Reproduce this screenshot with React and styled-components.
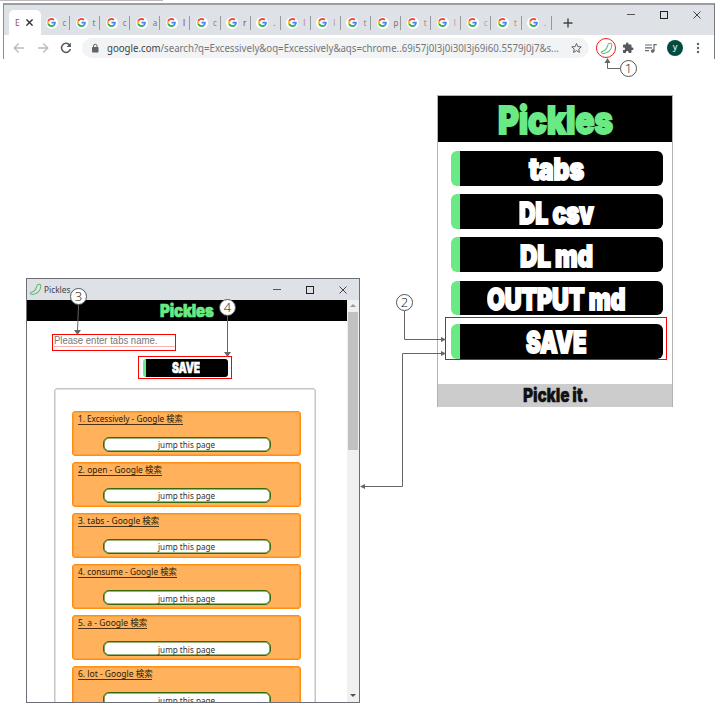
import React, { useLayoutEffect, useRef, useState } from "react";
import styled, { createGlobalStyle } from "styled-components";

const GlobalStyle = createGlobalStyle`
  * { box-sizing: border-box; }
  body { margin: 0; background: #fff; font-family: "Noto Sans", "Noto Sans CJK JP", sans-serif; }
`;

const Page = styled.main`
  position: relative;
  width: 720px;
  height: 720px;
  overflow: hidden;
  background: #fff;
`;
const TopRule = styled.div`
  width: 163px;
  height: 1px;
  background: #bdb9bd;
`;

/* Text stretched or condensed to an exact width */
const FitBox = styled.span`
  display: flex;
  width: ${(p) => p.$w}px;
  height: ${(p) => p.$size}px;
  line-height: ${(p) => p.$size}px;
  font-size: ${(p) => p.$size}px;
  margin-top: ${(p) => p.$dy || 0}px;
  flex: none;
  align-items: center;
`;
const FitInner = styled.span`
  display: inline-block;
  white-space: pre;
  transform-origin: 0 50%;
`;
function Fit({ w, size, dy, children, className }) {
  const ref = useRef(null);
  const [k, setK] = useState(1);
  useLayoutEffect(() => {
    setK(w / ref.current.offsetWidth);
  }, [w, children]);
  return (
    <FitBox $w={w} $size={size} $dy={dy} className={className}>
      <FitInner ref={ref} style={{ transform: `scaleX(${k})` }}>{children}</FitInner>
    </FitBox>
  );
}
const Heavy = styled(Fit)`
  font-family: Inter, Roboto, sans-serif;
  font-weight: 900;
  letter-spacing: -0.01em;
  color: ${(p) => p.$color || "#fff"};
  -webkit-text-stroke: ${(p) => p.$stroke ?? 1.8}px ${(p) => p.$color || "#fff"};
`;

/* Browser window */
const Browser = styled.section`
  width: 712px;
  height: 56px;
  margin: 2px 0 0 3px;
  border-top: 2px solid #9a9da1;
  border-left: 1px solid #8b8e92;
  border-right: 1px solid #777a7f;
`;
const TabStrip = styled.div`
  display: flex;
  height: 30px;
  padding: 5px 0 0 5px;
  background: #dee1e6;
`;
const ActiveTab = styled.div`
  display: flex;
  align-items: center;
  width: 32px;
  height: 25px;
  padding: 0 8px 0 6px;
  justify-content: space-between;
  background: #fff;
  border-radius: 5px 5px 0 0;
  font-size: 8.5px;
  color: #a04f45;
`;
const Tab = styled.div`
  display: flex;
  align-items: center;
  width: 30.1px;
  height: 25px;
  padding-left: 4.5px;
  font-size: 8px;
  &::after {
    content: "";
    width: 1px;
    height: 14px;
    margin-left: auto;
    margin-right: 1px;
    background: #96999e;
  }
`;
const Favicon = styled.span`
  display: flex;
  align-items: center;
  justify-content: center;
  width: 12px;
  height: 12px;
  border-radius: 50%;
  background: #fff;
`;
const TabLetter = styled.span`
  width: 4px;
  height: 12px;
  margin-left: 5px;
  line-height: 11px;
  color: ${(p) => p.$c};
`;
const NewTab = styled.div`
  display: flex;
  align-items: center;
  width: 12px;
  height: 25px;
  margin-left: 10px;
`;
const WindowButtons = styled.div`
  display: flex;
  gap: ${(p) => p.$gap}px;
  margin-left: auto;
  margin-right: ${(p) => p.$right}px;
  height: ${(p) => p.$h}px;
  align-items: center;
`;
const Toolbar = styled.div`
  display: flex;
  align-items: center;
  height: 24px;
  padding: 2px 0 0 9px;
`;
const NavButtons = styled.div`
  display: flex;
  gap: 11.5px;
  width: 69px;
`;
const AddressBar = styled.div`
  display: flex;
  align-items: center;
  width: 507px;
  height: 20px;
  padding: 0 6px 0 8px;
  background: #f1f3f4;
  border-radius: 10px;
`;
const Url = styled(Fit)`
  margin-left: 7px;
  margin-right: auto;
  color: #74777a;
  b { font-weight: 400; color: #3e4144; }
`;
const Extensions = styled.div`
  display: flex;
  align-items: center;
  margin-left: 7px;
`;
const PickleRing = styled.span`
  display: flex;
  align-items: center;
  justify-content: center;
  width: 20px;
  height: 20px;
  margin-right: 6px;
  border: 1px solid #ef1c1c;
  border-radius: 50%;
`;
const PlaylistIcon = styled.svg`
  margin: 0 10px 0 11px;
`;
const Avatar = styled.span`
  width: 16px;
  height: 16px;
  margin-right: 9px;
  border-radius: 50%;
  background: #004d40;
  color: #fff;
  font-size: 9px;
  line-height: 14px;
  text-align: center;
`;

/* Lower area */
const Lower = styled.div`
  display: flex;
  align-items: flex-start;
`;
const AppWindow = styled.section`
  width: 334px;
  height: 425px;
  margin: 219px 0 0 26px;
  border: 1px solid #6c7076;
  overflow: hidden;
`;
const TitleBar = styled.div`
  display: flex;
  align-items: center;
  height: 21px;
  padding-left: 2px;
  background: #dee1e6;
  color: #40444a;
`;
const WindowTitle = styled(Fit)`
  margin-left: 2px;
`;
const WindowBody = styled.div`
  display: flex;
  height: 402px;
`;
const Content = styled.div`
  width: 320px;
  height: 402px;
  overflow: hidden;
`;
const AppHeader = styled.header`
  display: flex;
  justify-content: center;
  align-items: center;
  height: 21px;
  background: #000;
`;
const NameField = styled.div`
  width: 124px;
  height: 17px;
  margin: 13px 0 0 25px;
  padding: 1px 0 0 1px;
  border: 1px solid #f00;
`;
const NameInput = styled.div`
  width: 121px;
  height: 11px;
  border-bottom: 1px solid #ffb3ae;
  font-family: "Liberation Sans", sans-serif;
  color: #777;
`;
const SaveFrame = styled.div`
  display: flex;
  align-items: center;
  width: 94px;
  height: 23px;
  margin: 5px 0 0 111px;
  padding: 0 3px 0 4px;
  border: 1px solid #f00;
`;
const SmallSave = styled.div`
  display: flex;
  align-items: center;
  justify-content: center;
  width: 85px;
  height: 18px;
  padding-right: 3px;
  border-left: 3px solid #69ea85;
  border-radius: 3px;
  background: #000;
`;
const List = styled.div`
  display: flex;
  flex-direction: column;
  gap: 6.1px;
  width: 262px;
  height: 330px;
  margin: 9px 0 0 27px;
  padding: 21.5px 0 0 16.5px;
  border: 1px solid #c6c6c6;
  box-shadow: inset 0 0 0 0.5px #c6c6c6;
  border-radius: 3px;
`;
const Card = styled.article`
  flex: none;
  width: 229.5px;
  height: 45px;
  padding: 1px 0 0 5px;
  border: 1px solid #ff8f12;
  box-shadow: inset 0 0 0 0.6px #ff8f12;
  border-radius: 3px;
  background: #ffb15c;
`;
const CardTitle = styled(Fit)`
  height: 12px;
  border-bottom: 1px solid #4c3210;
  color: #2a1b08;
`;
const Jump = styled.div`
  display: flex;
  align-items: center;
  justify-content: center;
  width: 168.5px;
  height: 14.5px;
  margin: 12.5px 0 0 25px;
  border: 1px solid #356b08;
  box-shadow: inset 0 0 0 0.6px #356b08;
  border-radius: 6px;
  background: #fff;
  color: #333;
`;
const Scrollbar = styled.div`
  display: flex;
  flex-direction: column;
  align-items: center;
  width: 12px;
  background: #f0f0f0;
`;
const Thumb = styled.div`
  width: 9.5px;
  height: 138px;
  margin: 5px 0 auto;
  background: #c1c1c1;
`;
const Caret = styled.div`
  width: 6px;
  height: 0;
  border: 3px solid transparent;
  ${(p) => (p.$up ? "border-bottom: 3px solid #9a9a9a; border-top: 0; margin-top: 4px;" : "border-top: 3px solid #505050; border-bottom: 0; margin-bottom: 5px;")}
`;

/* Popup */
const Popup = styled.section`
  width: 236px;
  height: 312px;
  margin: 36px 0 0 77px;
  border: 1px solid #b2b2b2;
  border-bottom: 0;
`;
const PopupHeader = styled.header`
  display: flex;
  align-items: center;
  justify-content: center;
  height: 46px;
  background: #000;
`;
const Menu = styled.nav`
  display: flex;
  flex-direction: column;
  gap: 8.4px;
  height: 242px;
  padding: 9px 0 0 12.5px;
`;
const MenuButton = styled.div`
  display: flex;
  flex: none;
  align-items: center;
  justify-content: center;
  width: 212px;
  height: 34.8px;
  padding-right: 10px;
  border-left: 9px solid #69ea85;
  border-radius: 6px;
  background: #000;
`;
const PopupFooter = styled.footer`
  display: flex;
  align-items: center;
  justify-content: center;
  height: 23px;
  background: #ccc;
`;

/* Callouts laid over the windows */
const Overlay = styled.svg`
  position: absolute;
  inset: 0;
`;
const Badge = styled.span`
  position: absolute;
  left: ${(p) => p.$x - 8.5}px;
  top: ${(p) => p.$y - 8.5}px;
  width: 17px;
  height: 17px;
  border: 1px solid #555;
  border-radius: 50%;
  background: #fff;
  color: #111;
  font-family: "Open Sans", sans-serif;
  font-size: 13px;
  font-weight: 300;
  line-height: 15px;
  text-align: center;
`;

const GoogleG = () => (
  <svg width="9" height="9" viewBox="0 0 48 48">
    <path fill="#ea4335" d="M24 9.5c3.54 0 6.71 1.22 9.21 3.6l6.85-6.85C35.9 2.38 30.47 0 24 0 14.62 0 6.51 5.38 2.56 13.22l7.98 6.19C12.43 13.72 17.74 9.5 24 9.5z" />
    <path fill="#4285f4" d="M46.98 24.55c0-1.57-.15-3.09-.38-4.55H24v9.02h12.94c-.58 2.96-2.26 5.48-4.78 7.18l7.73 6c4.51-4.18 7.09-10.36 7.09-17.65z" />
    <path fill="#fbbc05" d="M10.53 28.59A14.5 14.5 0 0 1 9.77 24c0-1.6.27-3.14.76-4.59l-7.98-6.19A23.9 23.9 0 0 0 0 24c0 3.88.92 7.54 2.56 10.78l7.97-6.19z" />
    <path fill="#34a853" d="M24 48c6.48 0 11.93-2.13 15.89-5.81l-7.73-6c-2.15 1.45-4.92 2.3-8.16 2.3-6.26 0-11.57-4.22-13.47-9.91l-7.98 6.19C6.51 42.62 14.62 48 24 48z" />
  </svg>
);
const Pickle = ({ size = 14 }) => (
  <svg width={size} height={size} viewBox="0 0 14 14" fill="none" stroke="#63b878" strokeWidth="1.1" strokeLinejoin="round">
    <path d="M9.3 1.9C10.3.8 12.6 1.200 12.700 3.300C12.900 7.600 8.700 12.600 3.300 12.300C1.500 12.200.8 11.100 1.800 10.400C2.700 9.800 4.600 9.900 6.200 7.900C8 5.700 7.900 3.600 9.300 1.900Z" />
  </svg>
);
const Minimise = () => <svg width="8" height="9"><path d="M0 4.5H8" stroke="#555" /></svg>;
const Maximise = () => <svg width="8" height="8"><rect x=".5" y=".5" width="7" height="7" fill="none" stroke="#222" /></svg>;
const Close = ({ size = 8, color = "#444", sw = 1 }) => (
  <svg width={size} height={size} viewBox="0 0 8 8"><path d="M.5.5l7 7M7.5.5l-7 7" stroke={color} strokeWidth={sw} /></svg>
);
const Arrow = ({ flip }) => (
  <svg width="12" height="12" viewBox="0 0 12 12" fill="none" stroke="#b9bbbd" strokeWidth="1.3">
    <path d={flip ? "M1 6H10.5M6.3 1.5L10.8 6L6.3 10.5" : "M11 6H1.5M5.7 1.5L1.2 6L5.7 10.5"} />
  </svg>
);

const TABS = [
  ["c", "#a1795f"], ["t", "#777"], ["c", "#977"], ["a", "#776"], ["l", "#727"], ["c", "#987"],
  ["r", "#555"], [".", "#666"], ["l", "#b7a"], ["l", "#a99"], ["t", "#988"], ["p", "#867"],
  ["t", "#b87"], ["l", "#b99"], ["c", "#aaa"], ["t", "#c85"], [".", "#888"],
];
const ITEMS = [
  ["1. Excessively - Google 検索", 105], ["2. open - Google 検索", 84], ["3. tabs - Google 検索", 81],
  ["4. consume - Google 検索", 99], ["5. a - Google 検索", 69], ["6. lot - Google 検索", 74.5],
];
const MENU = [["tabs", 55], ["DL csv", 75], ["DL md", 73], ["OUTPUT md", 138], ["SAVE", 60]];

export default function App() {
  return (
    <Page>
      <GlobalStyle />
      <TopRule />
      <Browser>
        <TabStrip>
          <ActiveTab>E<Close size={7} color="#333" sw={1.6} /></ActiveTab>
          {TABS.map(([t, c], i) => (
            <Tab key={i}><Favicon><GoogleG /></Favicon><TabLetter $c={c}>{t}</TabLetter></Tab>
          ))}
          <NewTab>
            <svg width="10" height="10"><path d="M5 .5V9.5M.5 5H9.5" stroke="#444" strokeWidth="1.4" /></svg>
          </NewTab>
          <WindowButtons $gap={25} $right={13} $h={9}><Minimise /><Maximise /><Close /></WindowButtons>
        </TabStrip>
        <Toolbar>
          <NavButtons>
            <Arrow /><Arrow flip />
            <svg width="12" height="12" viewBox="0 0 12 12" fill="none" stroke="#55585c" strokeWidth="1.5">
              <path d="M9.6 3.1A4.5 4.5 0 1 0 10.4 7" /><path d="M10.9.6V4.9H6.6Z" fill="#55585c" stroke="none" />
            </svg>
          </NavButtons>
          <AddressBar>
            <svg width="10" height="11" viewBox="0 0 10 11">
              <rect x="2" y="4" width="6.5" height="5.5" rx=".7" fill="#5f6368" />
              <path d="M3.5 4.5V3a1.75 1.75 0 0 1 3.5 0V4.5" fill="none" stroke="#5f6368" />
            </svg>
            <Url w={452} size={10}><b>google.com</b>/search?q=Excessively&amp;oq=Excessively&amp;aqs=chrome..69i57j0l3j0i30l3j69i60.5579j0j7&amp;s...</Url>
            <svg width="13" height="12" viewBox="0 0 24 24" fill="none" stroke="#5f6368" strokeWidth="2">
              <path d="M12 3l2.7 6.2 6.8.6-5.1 4.4 1.5 6.6L12 17.3l-5.9 3.5 1.5-6.6L2.5 9.8l6.8-.6z" />
            </svg>
          </AddressBar>
          <Extensions>
            <PickleRing><Pickle size={13} /></PickleRing>
            <svg width="12" height="12" viewBox="0 0 24 24" fill="#55585c">
              <path d="M20.5 11H19V7c0-1.1-.9-2-2-2h-4V3.5a2.5 2.5 0 0 0-5 0V5H4c-1.1 0-2 .9-2 2v3.8h1.5a2.7 2.7 0 0 1 0 5.4H2V20c0 1.1.9 2 2 2h3.8v-1.5a2.7 2.7 0 0 1 5.4 0V22H17c1.1 0 2-.9 2-2v-4h1.5a2.5 2.5 0 0 0 0-5z" />
            </svg>
            <PlaylistIcon width="12" height="11" viewBox="0 0 12 11" fill="none" stroke="#66696d" strokeWidth="1.2">
              <path d="M0 2H7M0 4.8H7M0 7.6H4M9 8V1.6H11.8" /><circle cx="7.7" cy="8" r="1.2" fill="#66696d" />
            </PlaylistIcon>
            <Avatar>y</Avatar>
            <svg width="12" height="12" fill="#5f6368"><circle cx="6" cy="2" r="1.2" /><circle cx="6" cy="6" r="1.2" /><circle cx="6" cy="10" r="1.2" /></svg>
          </Extensions>
        </Toolbar>
      </Browser>

      <Lower>
        <AppWindow>
          <TitleBar>
            <Pickle size={13} />
            <WindowTitle w={26} size={8}>Pickles</WindowTitle>
            <WindowButtons $gap={25} $right={12} $h={21}><Minimise /><Maximise /><Close /></WindowButtons>
          </TitleBar>
          <WindowBody>
            <Content>
              <AppHeader><Heavy w={54} size={17.5} $color="#69ea85" $stroke={0.7}>Pickles</Heavy></AppHeader>
              <NameField><NameInput><Fit w={103} size={10}>Please enter tabs name.</Fit></NameInput></NameField>
              <SaveFrame><SmallSave><Heavy w={28} size={14} $stroke={0.6}>SAVE</Heavy></SmallSave></SaveFrame>
              <List>
                {ITEMS.map(([t, w]) => (
                  <Card key={t}>
                    <CardTitle w={w} size={9}>{t}</CardTitle>
                    <Jump><Fit w={57} size={9} dy={1}>jump this page</Fit></Jump>
                  </Card>
                ))}
              </List>
            </Content>
            <Scrollbar><Caret $up /><Thumb /><Caret /></Scrollbar>
          </WindowBody>
        </AppWindow>
        <Popup>
          <PopupHeader><Heavy w={115} size={39} dy={1} $color="#69ea85">Pickles</Heavy></PopupHeader>
          <Menu>
            {MENU.map(([t, w]) => (
              <MenuButton key={t}><Heavy w={w} size={30} dy={2}>{t}</Heavy></MenuButton>
            ))}
          </Menu>
          <PopupFooter><Heavy w={65} size={19} $color="#111" $stroke={0.3}>Pickle it.</Heavy></PopupFooter>
        </Popup>
      </Lower>

      <Overlay width="720" height="720" fill="none" stroke="#666">
        <path d="M620 68.5H607.5V62M78.5 305L77.500 331M227.5 316V353M404.5 311V339.5H441M441 353.5H402.5V486.5H364" />
        <rect x="445.5" y="317.5" width="221" height="42" stroke="#f00" />
        <g fill="#666" stroke="none">
          <path d="M607.5 58L604.5 63H610.5ZM77.5 335L74 330H81ZM227.5 357L224 352H231ZM446 339.5L441 337V342ZM446 353.5L441 351V356ZM360 486.5L365 484V489Z" />
        </g>
      </Overlay>
      <Badge $x={628.5} $y={68.5}>1</Badge>
      <Badge $x={404.5} $y={302.5}>2</Badge>
      <Badge $x={78.5} $y={296.5}>3</Badge>
      <Badge $x={227.5} $y={307.5}>4</Badge>
    </Page>
  );
}
